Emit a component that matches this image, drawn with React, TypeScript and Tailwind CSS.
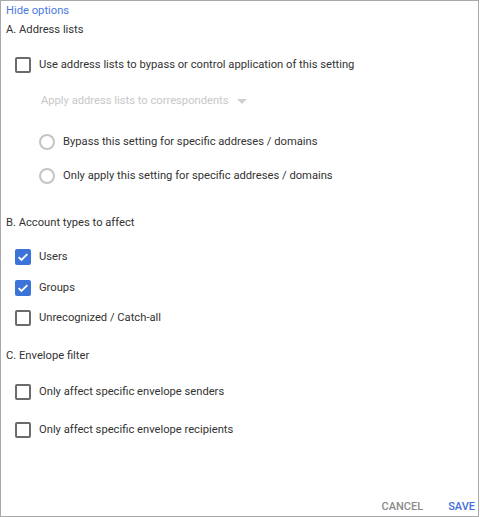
import React from "react";

const Checkbox = ({ checked }: { checked?: boolean }) =>
    checked ? (
        <span className="flex h-4 w-4 shrink-0 items-center justify-center rounded-[2px] bg-[#3b73d9]">
            <svg viewBox="0 0 16 16" className="h-3.5 w-3.5" fill="none">
                <path d="M3 8.2l3.2 3.2L13 4.6" stroke="white" strokeWidth="2" />
            </svg>
        </span>
    ) : (
        <span className="h-4 w-4 shrink-0 rounded-[2px] border-2 border-[#6b6b6b]" />
    );

const Radio = () => (
    <span className="h-4 w-4 shrink-0 rounded-full border-2 border-[#c4c4c4]" />
);

const CheckRow = ({ label, checked, className }: { label: string; checked?: boolean; className?: string }) => (
    <div className={`flex h-4 items-center gap-2 pl-[9px] ${className ?? ""}`}>
        <Checkbox checked={checked} />
        <span>{label}</span>
    </div>
);

const App = () => {
    return (
        <div
            className="flex h-[517px] w-[479px] flex-col border border-[#a9a9a9] bg-white text-[11.2px] leading-4 text-[#333]"
            style={{ fontFamily: "Roboto, 'Liberation Sans', sans-serif" }}
        >
            <div className="flex-1 px-[5px]">
                <div className="mt-[2px] h-4 text-[#4a78e0]">Hide options</div>
                <div className="mt-[3px] h-4">A. Address lists</div>

                <CheckRow className="mt-[19px]" label="Use address lists to bypass or control application of this setting" />

                <div className="mt-[20px] flex h-4 items-center gap-2 pl-[35px] text-[#c8c8c8]">
                    <span>Apply address lists to correspondents</span>
                    <svg viewBox="0 0 10 5" className="h-[5px] w-[10px]">
                        <path d="M0 0h10L5 5z" fill="#d0d0d0" />
                    </svg>
                </div>

                <div className="mt-[25px] flex h-4 items-center gap-2 pl-[33px]">
                    <Radio />
                    <span>Bypass this setting for specific addreses / domains</span>
                </div>
                <div className="mt-[18px] flex h-4 items-center gap-2 pl-[33px]">
                    <Radio />
                    <span>Only apply this setting for specific addreses / domains</span>
                </div>

                <div className="mt-[31px] h-4">B. Account types to affect</div>
                <CheckRow className="mt-[18px]" label="Users" checked />
                <CheckRow className="mt-[15px]" label="Groups" checked />
                <CheckRow className="mt-[14px]" label="Unrecognized / Catch-all" />

                <div className="mt-[22px] h-4">C. Envelope filter</div>
                <CheckRow className="mt-[20px]" label="Only affect specific envelope senders" />
                <CheckRow className="mt-[22px]" label="Only affect specific envelope recipients" />
            </div>

            <div className="flex justify-end gap-[25px] pb-[1px] pr-[3px] text-[11px] font-medium">
                <button className="text-[#8a8a8a]">CANCEL</button>
                <button className="text-[#3f6fdc]">SAVE</button>
            </div>
        </div>
    );
};

export default App;
